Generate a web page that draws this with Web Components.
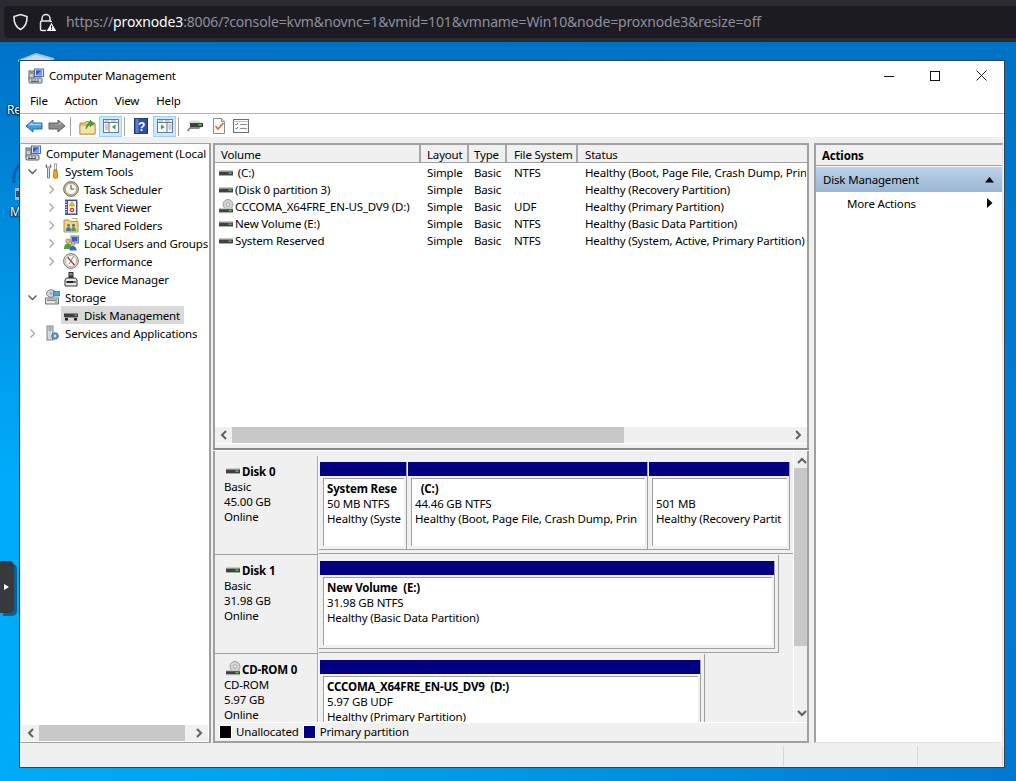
<!DOCTYPE html>
<html><head><meta charset="utf-8">
<style>
html,body{margin:0;padding:0;width:1016px;height:781px;overflow:hidden;font-family:"Noto Sans","Open Sans",sans-serif;font-size:11.5px;letter-spacing:-.17px;color:#000}
</style></head>
<body>
<script>
const ICONS={
comp:`<rect x="6.5" y="1" width="9" height="7.5" fill="#dfe6f0" stroke="#5a6b86"/><rect x="8" y="2.3" width="6" height="5" fill="#2a55d8"/><path d="M8 7.3l6-5v5z" fill="#6f9bf0"/><rect x="1" y="3" width="5" height="8" fill="#c9ced4" stroke="#55606c"/><rect x="2" y="4.5" width="3" height="1" fill="#555"/><rect x="1" y="10" width="13" height="5" rx="1" fill="#d4d8dc" stroke="#55606c"/><path d="M3 12h2M6 12h2M9 12h2M3 13.5h8" stroke="#55606c"/>`,
tools:`<path d="M2.500 1.500C1.500 3 2 5 3.500 5.500V15h2V5.500C7 5 7.500 3 6.500 1.500V4h-4z" fill="#dfe3e8" stroke="#6a7280" stroke-width=".9"/><rect x="10.300" y="1" width="2.400" height="6" fill="#fff" stroke="#777" stroke-width=".7"/><path d="M10 7h3l.6 7.500c-.3 1-3.900 1-4.200 0z" fill="#f2a915" stroke="#a86c00" stroke-width=".8"/>`,
clock:`<circle cx="8" cy="8" r="7.400" fill="#c9b98a" stroke="#77705a"/><circle cx="8" cy="8" r="5.600" fill="#f6f6f2" stroke="#8b8b80" stroke-width=".6"/><path d="M8 3.800V8h3.200" fill="none" stroke="#555" stroke-width="1.100"/>`,
book:`<rect x="2.500" y="1" width="11.500" height="14.500" fill="#3e5f9e" stroke="#2a3f6e" stroke-width=".8"/><rect x="5" y="2" width="8" height="12.500" fill="#f6f2e2"/><path d="M2 3h2M2 5.500h2M2 8h2M2 10.500h2M2 13h2" stroke="#ddd"/><path d="M9 2.500l2.600 4.500H6.400z" fill="#f7c60e" stroke="#a0800a" stroke-width=".5"/><circle cx="9" cy="11" r="2.300" fill="#d8343a"/><path d="M8 10l2 2M10 10l-2 2" stroke="#fff" stroke-width=".7"/>`,
share:`<path d="M1 3h5l1.500 1.500H15v10.500H1z" fill="#f1d488" stroke="#b08a35" stroke-width=".9"/><path d="M9 1.500h5V5" fill="none" stroke="#c9a24a"/><circle cx="5.500" cy="8.300" r="1.500" fill="#5c8a3a"/><path d="M3 14c0-3 1-4 2.500-4S8 11 8 14z" fill="#3c77b5"/><circle cx="10.500" cy="8.300" r="1.500" fill="#48698f"/><path d="M8.200 14c0-3 1-4 2.300-4s2.500 1 2.500 4z" fill="#4f9a49"/>`,
users:`<rect x="8" y="1" width="7.500" height="7" fill="#cfd8e6" stroke="#55606c" stroke-width=".8"/><rect x="9" y="2" width="5.500" height="4.500" fill="#2c5fd0"/><circle cx="5" cy="6" r="2.300" fill="#e6b68b" stroke="#8a5f3a" stroke-width=".5"/><path d="M1 14c0-4 1.500-5.500 4-5.500S9 10 9 14z" fill="#5b9b44"/><circle cx="10" cy="8.500" r="2" fill="#e3b187" stroke="#8a5f3a" stroke-width=".5"/><path d="M6.500 15.500c0-3 1.500-4.500 3.500-4.500s3.500 1.500 3.500 4.500z" fill="#2e6bbf"/>`,
perf:`<circle cx="8" cy="8" r="7.400" fill="#e5e1d4" stroke="#77756b"/><circle cx="8" cy="8" r="5.500" fill="#fff" stroke="#99968a" stroke-width=".7"/><path d="M4.700 4.200L11.500 12.200" stroke="#d62c2c" stroke-width="1.400"/><path d="M10.500 3.500L6 11" stroke="#666" stroke-width=".8"/>`,
dev:`<rect x="5.500" y="1" width="5" height="6" fill="#333"/><rect x="6.500" y="2" width="3" height="2.500" fill="#888"/><path d="M3.500 7h9l1.500 2v6H2V9z" fill="#e6e6e6" stroke="#333"/><rect x="3.500" y="10" width="9" height="2" fill="#222"/><rect x="10" y="10.500" width="2" height="1" fill="#57d15a"/>`,
storage:`<ellipse cx="7" cy="4.500" rx="4.500" ry="3.800" fill="#cfd4d9" stroke="#6b737c" stroke-width=".8"/><circle cx="7" cy="4.500" r="1.200" fill="#9aa"/><rect x="9.500" y="2.500" width="6" height="4.500" fill="#48a8dc" stroke="#2b6f98" stroke-width=".7"/><path d="M1.500 9h13v6h-13z" fill="#e2e4e6" stroke="#6b737c"/><rect x="3" y="10.500" width="10" height="1.500" fill="#888"/><rect x="11" y="12.500" width="2.500" height="1.500" fill="#5fc060"/>`,
disk:`<path d="M2 3h12l1.500 4v2.500H.5V7z" fill="#d7d7d7"/><rect x="1" y="6.500" width="14" height="3.500" fill="#3c3c3c"/><rect x="11.500" y="7.500" width="2.500" height="1.300" fill="#56d656"/><rect x="1.500" y="10" width="13" height="1" fill="#9a9a9a"/><rect x="2" y="11" width="3" height="2.500" fill="#222"/><rect x="11" y="11" width="3" height="2.500" fill="#222"/>`,
drive:`<rect x="1" y="5" width="14" height="1.500" fill="#c9c9c9"/><rect x="1" y="6.500" width="14" height="3.500" fill="#404040"/><rect x="10.500" y="7.500" width="3" height="1.300" fill="#55d455"/><rect x="1" y="10" width="14" height="1" fill="#a8a8a8"/>`,
cd:`<circle cx="10" cy="5.500" r="5" fill="#d4d4d4" stroke="#8a8a8a" stroke-width=".8"/><circle cx="10" cy="5.500" r="1.700" fill="#f5f5f5" stroke="#888" stroke-width=".7"/><rect x="1" y="9" width="14" height="1.200" fill="#c9c9c9"/><rect x="1" y="10.200" width="14" height="3" fill="#404040"/><rect x="10.500" y="11" width="3" height="1.200" fill="#55d455"/><rect x="1" y="13.200" width="14" height="1" fill="#a8a8a8"/>`,
svc:`<rect x="3" y="1" width="6" height="14" fill="#d6dbe0" stroke="#6c7680" stroke-width=".9"/><path d="M4.500 3h3M4.500 5h3" stroke="#6c7680"/><circle cx="11" cy="11" r="3.200" fill="#6f9ccf" stroke="#3d6794" stroke-width="1.200" stroke-dasharray="1.500 .8"/><circle cx="11" cy="11" r="1.100" fill="#fff"/>`,
back:`<path d="M1 8.500L8 2.500V5.500H17V11.500H8V14.500z" transform="translate(0 .5)" fill="#3c9ce6" stroke="#1f6db4"/><path d="M3 8.300L7.500 5V6.800H16V8.300z" fill="#9fd4f8"/>`,
fwd:`<path d="M17 9L10 3V6H1V12H10V15z" fill="#8c8c8c" stroke="#5f5f5f"/><path d="M2 7h9V5l3 2.500z" fill="#c0c0c0"/>`,
up:`<path d="M1 5h5l1-1.500h3V5h6v11H1z" fill="#f2d58b" stroke="#b08a35"/><path d="M1 7h15v9H1z" fill="#f7e2a6" stroke="#b08a35" stroke-width=".7"/><path d="M7 11c0-4 2-6 4-7V2l4 3.500-4 3V6.500C9 7.500 8.500 9 7 11z" fill="#3aa43a" stroke="#1e7a1e" stroke-width=".5"/>`,
tree:`<rect x=".5" y="1.500" width="15" height="13" fill="#f4f7fb" stroke="#6c7a8a"/><path d="M.5 4.500h15" stroke="#6c7a8a"/><path d="M2 3h4M8 3h5" stroke="#9aa5b2"/><path d="M6 4.500v10" stroke="#6c7a8a"/><path d="M2 7h3M2 9h3M2 11h3" stroke="#9aa5b2"/><path d="M12.500 6.500v5l-3.500-2.500z" fill="#2ea043"/>`,
action:`<rect x=".5" y="1.500" width="15" height="13" fill="#f4f7fb" stroke="#6c7a8a"/><path d="M.5 4.500h15" stroke="#6c7a8a"/><path d="M2 3h4M8 3h5" stroke="#9aa5b2"/><path d="M10 4.500v10" stroke="#6c7a8a"/><path d="M11.500 7h3M11.500 9h3M11.500 11h3" stroke="#9aa5b2"/><path d="M4 6.500v5l3.500-2.500z" fill="#2ea043"/>`,
help:`<rect x="1.500" y="0" width="13" height="16" fill="#2f4f9f" stroke="#1e2f70"/><rect x="2.500" y="1" width="3" height="14" fill="#5d7dc9"/><text x="8.500" y="12.500" font-family="Liberation Sans" font-size="12" font-weight="bold" fill="#fff" text-anchor="middle">?</text>`,
list:`<path d="M2 12l4-3h10l-3 3z" fill="#888"/><ellipse cx="9" cy="5.500" rx="6" ry="2" fill="#d6d6d6"/><rect x="4" y="6" width="13" height="4" fill="#404040"/><rect x="12.500" y="7" width="3" height="1.500" fill="#5ad95a"/><path d="M5 10l-3.500 4" stroke="#7a7a7a" stroke-width="1.500"/>`,
check:`<path d="M2.500 .5h8l3 3V15.500h-11z" fill="#fafafa" stroke="#8c8c8c"/><path d="M10.500 .5v3h3" fill="#e6e6e6" stroke="#8c8c8c"/><path d="M4.500 8l2.500 3L12.500 5" fill="none" stroke="#e2622b" stroke-width="1.500"/>`,
props:`<rect x=".5" y="1.500" width="15" height="13" fill="#fbfbfb" stroke="#707070"/><path d="M.5 3.500h15" stroke="#c0c0c0"/><path d="M2.500 6l1 1 1.500-2M2.500 10l1 1 1.500-2" fill="none" stroke="#2f86c8"/><path d="M7 6.500h7M7 10.500h7" stroke="#909090"/>`
};
function def(name,html){customElements.define(name,class extends HTMLElement{
 connectedCallback(){if(this.shadowRoot)return;const r=this.attachShadow({mode:'open'});r.innerHTML=typeof html==='function'?html(this):html;}
});}
def('ui-icon',h=>{const s=h.getAttribute('size')||16,v=h.getAttribute('vb')||'0 0 16 16';return `<style>:host{display:inline-flex;flex:none;width:${s}px;height:${s}px}svg{display:block;width:100%;height:100%}</style><svg viewBox="${v}">${ICONS[h.getAttribute('name')]||''}</svg>`});

def('browser-bar',`<style>
:host{display:flex;align-items:center;box-sizing:border-box;height:42px;background:#2b2a33;padding:6px 0 4px 4px;color:#fbfbfe}
.f{flex:1;height:32px;background:#1c1b22;border-radius:4px 0 0 4px;display:flex;align-items:center;font:14px/1 "Noto Sans",sans-serif;color:#8f8f9d;padding-left:8px;white-space:nowrap;overflow:hidden}
svg{flex:none;display:block}
b{font-weight:400;color:#fbfbfe}
.u{margin-left:9px;letter-spacing:-.145px}
</style><div class="f">
<svg width="17" height="18" viewBox="0 0 17 18" style="margin-right:10px"><path d="M8.500 1.500L15 3.500c.2 6-1.500 10.500-6.500 13C3.500 14 1.800 9.500 2 3.500z" fill="none" stroke="#e8e8ec" stroke-width="1.600"/></svg>
<svg width="18" height="19" viewBox="0 0 18 19"><path d="M3 8V5.500a4 4 0 018 0V8" fill="none" stroke="#e8e8ec" stroke-width="1.500"/><rect x="1.500" y="8" width="11" height="9.500" rx="1.500" fill="none" stroke="#e8e8ec" stroke-width="1.500"/><path d="M12.500 9L18 18.500H7z" fill="#fff" stroke="#1c1b22"/><rect x="12" y="12.500" width="1" height="3" fill="#1c1b22"/><rect x="12" y="16" width="1" height="1" fill="#1c1b22"/></svg>
<span class="u">https://<b>proxnode3</b>:8006/?console=kvm&amp;novnc=1&amp;vmid=101&amp;vmname=Win10&amp;node=proxnode3&amp;resize=off</span>
</div>`);

def('desk-items',`<style>
:host{display:block;position:absolute;inset:0;pointer-events:none}
.t{position:absolute;color:#fff;font:12px "Noto Sans",sans-serif;text-shadow:0 0 2px #000,0 1px 2px #000}
svg{position:absolute}
</style>
<svg style="left:16px;top:52px" width="40" height="10"><path d="M2 8L20 1l18 5v4H2z" fill="#9cc3dc"/><path d="M6 8L20 3l14 4v3H6z" fill="#c8dbe7"/></svg>
<span class="t" style="left:7px;top:101px">Re</span>
<svg style="left:12px;top:163px" width="10" height="40"><path d="M8 2C3 6 1 12 2 20" fill="none" stroke="#0f5fae" stroke-width="3"/><rect x="3" y="25" width="7" height="12" fill="#aab6c2"/><rect x="4" y="28" width="4" height="6" fill="#36506e"/></svg>
<span class="t" style="left:10px;top:203px">M</span>`);

def('side-tab',`<style>
:host{display:flex;align-items:center;position:absolute;left:0;top:561px;width:14px;height:52px;background:#373a3d;border-radius:0 5px 5px 0;box-shadow:3px 3px 0 #0c5f90;padding-left:4px;box-sizing:border-box}
i{display:block;width:0;height:0;border-left:5px solid #fff;border-top:3px solid transparent;border-bottom:3px solid transparent}
</style><i></i>`);

def('mmc-window',`<style>
:host{display:flex;flex-direction:column;position:absolute;left:19px;top:60px;width:986px;height:708px;box-sizing:border-box;border:1px solid #2f4354;background:#f0f0f0}
</style><slot></slot>`);

def('title-bar',`<style>
:host{display:flex;align-items:center;height:27px;flex:none;box-sizing:border-box;background:#fff;padding:2px 0 0 8px}
.t{flex:1;margin-left:5px}
.b{width:46px;height:25px;display:flex;align-items:center;justify-content:center}
svg{display:block}
</style><ui-icon name="comp"></ui-icon><span class="t">Computer Management</span>
<span class="b"><svg width="10" height="10"><path d="M0 5.500h10" stroke="#111"/></svg></span>
<span class="b"><svg width="10" height="10"><rect x=".5" y=".5" width="9" height="9" fill="none" stroke="#111"/></svg></span>
<span class="b"><svg width="11" height="11"><path d="M.5 .5l10 10M10.500 .5l-10 10" stroke="#222"/></svg></span>`);

def('menu-bar',`<style>
:host{display:flex;align-items:center;height:26px;flex:none;box-sizing:border-box;background:#fff;border-bottom:1px solid #b3b3b3;padding:0 0 0 10px;gap:17px}
</style><slot></slot>`);

def('tool-bar',`<style>
:host{display:flex;align-items:center;height:23px;flex:none;box-sizing:border-box;background:#fff;padding:1px 0 0 2px}
</style><slot></slot>`);
def('tool-btn',h=>`<style>
:host{display:flex;align-items:center;justify-content:center;width:23px;height:21px;box-sizing:border-box;flex:none;${h.hasAttribute('on')?'background:#cce8ff;border:1px solid #99d1ff;':''}}
</style><slot></slot>`);
def('tool-sep',`<style>:host{display:block;width:1px;height:19px;background:#a0a0a0;margin:0 2px;flex:none}</style>`);

def('console-body',`<style>
:host{display:flex;flex:1;min-height:0;padding-top:6px;box-sizing:border-box}
</style><slot></slot>`);

def('tree-pane',`<style>
:host{display:flex;flex-direction:column;width:191px;flex:none;box-sizing:border-box;background:#fff;border:solid #a0a0a0;border-width:1px 2px 1px 0;border-left:1px solid #e4e4e4;overflow:hidden}
.l{flex:1;overflow:hidden;min-height:0}
</style><div class="l"><slot></slot></div><h-scroll left="1" width="186" tl="17" tw="146"></h-scroll>`);

def('tree-row',h=>{
 const lv=+h.getAttribute('level')||0,ex=h.getAttribute('exp'),sel=h.hasAttribute('sel'),ic=h.getAttribute('icon');
 const pad=[2,4,23][lv];
 const chev=ex==='open'?`<path d="M.5 2.500l4 4 4-4" fill="none" stroke="#555" stroke-width="1.300"/>`:ex==='closed'?`<path d="M2.500 .5l4 4-4 4" fill="none" stroke="#a6a6a6" stroke-width="1.300"/>`:'';
 return `<style>
 :host{display:flex;align-items:center;height:18px;white-space:nowrap;padding-left:${pad}px;box-sizing:border-box}
 .c{width:16px;flex:none;display:${lv?'flex':'none'};justify-content:flex-start;padding-left:3px;box-sizing:border-box}
 svg{display:block}
 .s{display:flex;flex:none;align-items:center;height:18px;${sel?'background:#d9d9d9;':''}margin-left:${lv?1:0}px;padding-right:4px;padding-left:2px}
 .tx{margin-left:5px}
 </style><span class="c"><svg width="9" height="9">${chev}</svg></span><span class="s"><ui-icon name="${ic}"></ui-icon><span class="tx"><slot></slot></span></span>`});

def('h-scroll',h=>{
 const tl=h.getAttribute('tl'),tw=h.getAttribute('tw'),ml=h.getAttribute('left')||0;
 return `<style>
 :host{display:flex;align-items:center;flex:none;height:16px;background:#f0f0f0;position:relative;margin:0 1px 1px ${ml}px;padding:0}
 .th{height:16px;background:#c8c8c8;width:${tw}px;margin-left:${tl}px}
 svg{display:block;flex:none}
 .a{position:absolute;top:3px}
 </style><svg class="a" style="left:5px" width="8" height="10"><path d="M6 1L2 5l4 4" fill="none" stroke="#606060" stroke-width="2"/></svg><div class="th"></div><svg class="a" style="right:5px" width="8" height="10"><path d="M2 1l4 4-4 4" fill="none" stroke="#606060" stroke-width="2"/></svg>`});

def('center-pane',`<style>
:host{display:flex;flex-direction:column;width:596px;flex:none;margin-left:2px;box-sizing:border-box;overflow:hidden}
</style><slot></slot>`);

def('volume-list',`<style>
:host{display:flex;flex-direction:column;height:305px;flex:none;box-sizing:border-box;background:#fff;border:solid #a0a0a0;border-width:1px 2px 0 2px;}
.h{display:flex;height:19px;flex:none;background:#f0f0f0;border-top:1px solid #a0a0a0;border-bottom:1px solid #a0a0a0;box-sizing:border-box}
.h span{box-sizing:border-box;border-right:2px solid #a8a8a8;padding:1px 0 0 6px;line-height:17px;overflow:hidden;white-space:nowrap;flex:none}
.rows{flex:1;padding-top:1px;min-height:0}
.foot{height:5px;flex:none;background:#f0f0f0;border-top:1px solid #fff;box-sizing:border-box}
</style>
<div class="h"><span style="width:206px">Volume</span><span style="width:48px">Layout</span><span style="width:38px;padding-left:5px">Type</span><span style="width:71px;padding-left:7px">File System</span><span style="width:229px;border:0;padding-left:7px">Status</span></div>
<div class="rows"><slot></slot></div>
<h-scroll tl="17" tw="392" style="margin:0"></h-scroll>
<div class="foot"></div>`);

def('vol-row',h=>{
 const g=a=>h.getAttribute(a)||'';
 return `<style>
 :host{display:flex;height:17px;align-items:center;white-space:nowrap}
 span{flex:none;overflow:hidden;box-sizing:border-box}
 .v{width:206px;display:flex;align-items:center;padding-left:3px}
 .v b{font-weight:400;margin-left:1px}
 .f{width:48px;padding-left:6px}.g{width:38px;padding-left:5px}.s{width:71px;padding-left:7px}.st{width:228px;padding-left:7px}
 </style><span class="v"><ui-icon name="${g('ic')}"></ui-icon><b>${g('name')}</b></span><span class="f">Simple</span><span class="g">Basic</span><span class="s">${g('fs')}</span><span class="st">${g('status')}</span>`});

def('pane-split',`<style>:host{display:block;height:3px;flex:none;background:#fff;border-top:2px solid #8a8a8a;box-sizing:border-box}</style>`);

def('disk-pane',`<style>
:host{display:flex;flex-direction:column;flex:1;min-height:0;box-sizing:border-box;background:#f0f0f0;border:solid #a0a0a0;border-width:0 2px 2px 2px}
.m{display:flex;height:271px;flex:none;overflow:hidden}
.sc{width:578px;flex:none;overflow:hidden;padding-top:5px;box-sizing:border-box;height:271px}
.leg{flex:1;border-top:1px solid #fff;display:flex;align-items:center;padding:0 0 1px 5px}
</style><div class="m"><div class="sc"><slot></slot></div><v-scroll></v-scroll></div><div class="leg"><slot name="leg"></slot></div>`);

def('v-scroll',`<style>
:host{display:block;width:15px;flex:none;height:271px;background:#f0f0f0;border-left:1px solid #fff;position:relative}
.th{position:absolute;left:0;right:0;top:17px;height:178px;background:#c8c8c8}
svg{position:absolute;left:3px;display:block}
</style><svg style="top:6px" width="10" height="8"><path d="M1 6l4-4 4 4" fill="none" stroke="#606060" stroke-width="2"/></svg><div class="th"></div><svg style="top:258px" width="10" height="8"><path d="M1 2l4 4 4-4" fill="none" stroke="#606060" stroke-width="2"/></svg>`);

def('disk-row',h=>{const g=a=>h.getAttribute(a)||'';
 return `<style>
 :host{display:flex;height:99px;flex:none}
 .l{width:104px;flex:none;box-sizing:border-box;border-bottom:1px solid #a0a0a0;border-right:1px solid #fff;box-shadow:inset -1px 0 0 #a8a8a8;padding:7px 0 0 9px;line-height:15px}
 .n{display:flex;align-items:center;font-weight:700;height:16px;margin-left:1px}
 .n ui-icon{margin-right:1px}
 .x{display:block}
 .w{display:flex;align-items:flex-start;box-sizing:border-box;height:98px;padding:6px 3px 3px 0;border-right:1px solid #a0a0a0;border-bottom:1px solid #a0a0a0;flex:none}
 </style><div class="l"><div class="n"><ui-icon name="${g('ic')}"></ui-icon>${g('name')}</div><div class="x">${g('kind')}</div><div class="x">${g('size')}</div><div class="x">${g('state')}</div></div><div class="w"><slot></slot></div>`});

def('part-box',h=>{const g=a=>h.getAttribute(a)||'';
 return `<style>
 :host{display:flex;flex-direction:column;box-sizing:border-box;height:88px;width:${g('w')}px;padding-left:1px;border-right:1px solid #a0a0a0;border-bottom:1px solid #a0a0a0;flex:none;line-height:15px}
 .bar{height:14px;background:#000080;flex:none}
 .in{margin:2px 2px 3px 3px;flex:1;min-height:0;background:#fff;border-top:1px solid #a0a0a0;border-left:1px solid #a0a0a0;padding:2px 4px 0 3px;overflow:hidden;white-space:pre}
 .t{font-weight:700;height:15px}
 </style><div class="bar"></div><div class="in"><div class="t">${g('title')}</div><div>${g('info')}</div><div>${g('status')}</div></div>`});

def('leg-item',h=>`<style>
:host{display:flex;align-items:center;margin-right:5px}
i{display:block;width:11px;height:12px;background:${h.getAttribute('c')};outline:1px solid #fff;margin-right:5px}
</style><i></i><slot></slot>`);

def('actions-pane',`<style>
:host{display:flex;flex-direction:column;width:189px;flex:none;margin-left:5px;box-sizing:border-box;background:#fff;border-left:2px solid #a0a0a0;border-top:2px solid #a0a0a0;border-right:1px solid #e4e4e4;border-bottom:1px solid #e4e4e4}
.h{height:21px;flex:none;box-sizing:border-box;background:#f0f0f0;border-bottom:1px solid #a0a0a0;font-weight:700;padding:1px 0 0 6px;line-height:20px}
.b{height:25px;flex:none;margin-top:1px;background:linear-gradient(#bcd2e8,#99b6d3);display:flex;align-items:center;justify-content:space-between;padding:0 8px 0 7px}
.r{height:22px;display:flex;align-items:center;justify-content:space-between;padding:0 9px 0 31px}
svg{display:block}
</style><div class="h">Actions</div>
<div class="b"><span>Disk Management</span><svg width="9" height="6"><path d="M4.500 0L9 5.500H0z" fill="#000"/></svg></div>
<div class="r"><span>More Actions</span><svg width="6" height="10"><path d="M0 0l5.500 5L0 10z" fill="#000"/></svg></div>`);

def('status-bar',`<style>
:host{display:flex;height:24px;flex:none;box-sizing:border-box;padding:3px 0 1px 0;background:#f0f0f0}
i{display:block;box-sizing:border-box;border-right:1px solid #d7d7d7;flex:none}
</style><i style="width:764px"></i><i style="width:134px"></i><i style="width:85px"></i>`);

def('app-desktop',`<style>
:host{display:block;position:relative;width:1016px;height:781px;overflow:hidden;background:linear-gradient(100deg,#00b0ff 0%,#009be8 50%,#0078d2 100%)}
.d{position:absolute;left:0;right:0;top:42px;bottom:0;background:linear-gradient(#0072c6,rgba(0,120,210,0) 60%)}
::slotted(browser-bar){position:relative;z-index:2}
</style><div class="d"></div><slot></slot>`);
</script>

<app-desktop>
<browser-bar></browser-bar>
<desk-items></desk-items>
<side-tab></side-tab>
<mmc-window>
 <title-bar></title-bar>
 <menu-bar><span>File</span><span>Action</span><span>View</span><span>Help</span></menu-bar>
 <tool-bar>
  <tool-btn><ui-icon name="back" size="18" vb="0 0 18 18"></ui-icon></tool-btn>
  <tool-btn><ui-icon name="fwd" size="18" vb="0 0 18 18"></ui-icon></tool-btn>
  <tool-sep></tool-sep>
  <tool-btn style="margin-left:3px"><ui-icon name="up" size="17" vb="0 0 17 17"></ui-icon></tool-btn>
  <tool-btn on><ui-icon name="tree"></ui-icon></tool-btn>
  <tool-sep></tool-sep>
  <tool-btn style="margin-left:2px"><ui-icon name="help"></ui-icon></tool-btn>
  <tool-btn on style="margin-left:1px"><ui-icon name="action"></ui-icon></tool-btn>
  <tool-sep></tool-sep>
  <tool-btn style="margin-left:2px"><ui-icon name="list" size="18" vb="0 0 18 18"></ui-icon></tool-btn>
  <tool-btn style="margin-left:1px"><ui-icon name="check"></ui-icon></tool-btn>
  <tool-btn style="margin-left:-1px"><ui-icon name="props"></ui-icon></tool-btn>
 </tool-bar>
 <console-body>
  <tree-pane>
   <tree-row icon="comp">Computer Management (Local</tree-row>
   <tree-row level="1" exp="open" icon="tools">System Tools</tree-row>
   <tree-row level="2" exp="closed" icon="clock">Task Scheduler</tree-row>
   <tree-row level="2" exp="closed" icon="book">Event Viewer</tree-row>
   <tree-row level="2" exp="closed" icon="share">Shared Folders</tree-row>
   <tree-row level="2" exp="closed" icon="users">Local Users and Groups</tree-row>
   <tree-row level="2" exp="closed" icon="perf">Performance</tree-row>
   <tree-row level="2" icon="dev">Device Manager</tree-row>
   <tree-row level="1" exp="open" icon="storage">Storage</tree-row>
   <tree-row level="2" icon="disk" sel>Disk Management</tree-row>
   <tree-row level="1" exp="closed" icon="svc">Services and Applications</tree-row>
  </tree-pane>
  <center-pane>
   <volume-list>
    <vol-row ic="drive" name="&nbsp;(C:)" fs="NTFS" status="Healthy (Boot, Page File, Crash Dump, Prin"></vol-row>
    <vol-row ic="drive" name="(Disk 0 partition 3)" fs="" status="Healthy (Recovery Partition)"></vol-row>
    <vol-row ic="cd" name="CCCOMA_X64FRE_EN-US_DV9 (D:)" fs="UDF" status="Healthy (Primary Partition)"></vol-row>
    <vol-row ic="drive" name="New Volume (E:)" fs="NTFS" status="Healthy (Basic Data Partition)"></vol-row>
    <vol-row ic="drive" name="System Reserved" fs="NTFS" status="Healthy (System, Active, Primary Partition)"></vol-row>
   </volume-list>
   <pane-split></pane-split>
   <disk-pane>
    <disk-row ic="drive" name="Disk 0" kind="Basic" size="45.00 GB" state="Online">
     <part-box w="88" title="System Rese" info="50 MB NTFS" status="Healthy (Syste"></part-box>
     <part-box w="241" title="  (C:)" info="44.46 GB NTFS" status="Healthy (Boot, Page File, Crash Dump, Prin"></part-box>
     <part-box w="142" title=" " info="501 MB" status="Healthy (Recovery Partit"></part-box>
    </disk-row>
    <disk-row ic="drive" name="Disk 1" kind="Basic" size="31.98 GB" state="Online">
     <part-box w="456" title="New Volume  (E:)" info="31.98 GB NTFS" status="Healthy (Basic Data Partition)"></part-box>
    </disk-row>
    <disk-row ic="cd" name="CD-ROM 0" kind="CD-ROM" size="5.97 GB" state="Online">
     <part-box w="382" title="CCCOMA_X64FRE_EN-US_DV9  (D:)" info="5.97 GB UDF" status="Healthy (Primary Partition)"></part-box>
    </disk-row>
    <leg-item slot="leg" c="#000">Unallocated</leg-item>
    <leg-item slot="leg" c="#000080">Primary partition</leg-item>
   </disk-pane>
  </center-pane>
  <actions-pane></actions-pane>
 </console-body>
 <status-bar></status-bar>
</mmc-window>
</app-desktop>
</body></html>
